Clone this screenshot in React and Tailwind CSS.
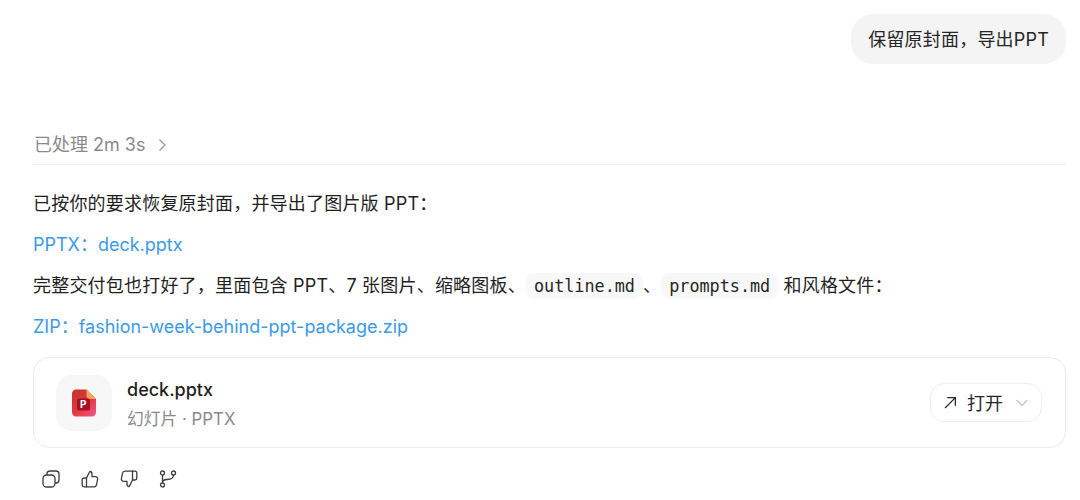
import React from "react";

function PptIcon() {
  return (
    <svg width="24" height="28" viewBox="0 0 24 28" fill="none">
      <defs>
        <linearGradient id="g1" x1="0" y1="0" x2="24" y2="28" gradientUnits="userSpaceOnUse">
          <stop offset="0" stopColor="#bf3328" />
          <stop offset="0.55" stopColor="#e23a3f" />
          <stop offset="1" stopColor="#f4558f" />
        </linearGradient>
      </defs>
      <path d="M4 0.500H14.500L24 10V23.500C24 25.700 22.200 27.500 20 27.500H4C1.800 27.500 0 25.700 0 23.500V4.500C0 2.300 1.800 0.500 4 0.500Z" fill="url(#g1)" />
      <path d="M14.500 0.500L24 10H18C16 10 14.500 8.500 14.500 6.500Z" fill="#f6a65c" />
      <rect x="5" y="9.500" width="13" height="12" rx="2" fill="#a80f24" />
    </svg>
  );
}

function CopyIcon() {
  return (
    <svg width="18" height="18" viewBox="0 0 18 18" fill="none" stroke="#3d3d3d" strokeWidth="1.300" strokeLinejoin="round">
      <rect x="1" y="5" width="12" height="12" rx="3.500" />
      <path d="M5 5V4C5 2.300 6.300 1 8 1H14C15.700 1 17 2.300 17 4V10C17 11.700 15.700 13 14 13H13" />
    </svg>
  );
}

function ThumbUp() {
  return (
    <svg width="18" height="18" viewBox="0 0 18 18" fill="none" stroke="#3d3d3d" strokeWidth="1.300" strokeLinejoin="round" strokeLinecap="round">
      <path d="M5.500 8L8.800 1.500C10.300 1.500 11 2.700 11 4V6.700H14.500C16 6.700 16.900 8 16.600 9.400L15.500 14.800C15.300 16 14.300 16.800 13 16.800H5.500Z" />
      <path d="M5.500 8H3C2 8 1.200 8.800 1.200 9.800V15C1.200 16 2 16.800 3 16.800H5.500" />
    </svg>
  );
}

function ThumbDown() {
  return (
    <svg width="18" height="18" viewBox="0 0 18 18" fill="none" stroke="#3d3d3d" strokeWidth="1.300" strokeLinejoin="round" strokeLinecap="round">
      <path d="M12.500 10L9.200 16.500C7.700 16.500 7 15.300 7 14V11.300H3.500C2 11.300 1.100 10 1.400 8.600L2.500 3.200C2.700 2 3.700 1.200 5 1.200H12.500Z" />
      <path d="M12.500 10H15C16 10 16.800 9.200 16.800 8.200V3C16.800 2 16 1.200 15 1.200H12.500" />
    </svg>
  );
}

function BranchIcon() {
  return (
    <svg width="18" height="18" viewBox="0 0 18 18" fill="none" stroke="#3d3d3d" strokeWidth="1.300">
      <circle cx="3.500" cy="3" r="2" />
      <circle cx="3.500" cy="15" r="2" />
      <circle cx="14.500" cy="3" r="2" />
      <path d="M3.500 5V13M14.500 5C14.500 8.500 11 9.500 8 9.500C5.500 9.500 3.500 10.500 3.500 13" />
    </svg>
  );
}

function Code({ children }) {
  return (
    <code className="rounded-lg bg-[#f8f8f8] px-2 py-[3px] text-[16.800px] tracking-normal text-[#262626] [font-family:'DejaVu_Sans_Mono','Liberation_Mono',monospace]">
      {children}
    </code>
  );
}

export default function App() {
  return (
    <div className="flex h-[500px] w-[1080px] flex-col overflow-hidden bg-white pl-[33px] pr-[14px] pt-[14px] text-[18px] text-[#1f1f1f] antialiased [font-family:Inter,'Noto_Sans_CJK_SC',sans-serif]">
      <div className="flex justify-end">
        <div className="flex h-[50px] items-center rounded-[22px] bg-[#f4f4f4] px-[17px] pt-[1px] tracking-[0.2px] text-[#262626]">
          保留原封面，导出PPT
        </div>
      </div>

      <div className="mt-[66px] flex h-[35px] items-start gap-3 border-b border-[#f1f1f1] pl-[1px] text-[#8a8a8a]">
        <span className="leading-[30px]">已处理 2m 3s</span>
        <svg className="mt-[8px]" width="9" height="14" viewBox="0 0 9 14" fill="none" stroke="#9a9a9a" strokeWidth="1.300">
          <path d="M1.500 1.500L7 7L1.500 12.500" />
        </svg>
      </div>

      <div className="mt-[25px] flex flex-col gap-[13px] leading-[28px]">
        <p className="tracking-[0.2px]">已按你的要求恢复原封面，并导出了图片版 PPT：</p>
        <p className="text-[#3b9ae8]">PPTX：deck.pptx</p>
        <p className="tracking-[0.2px]">
          完整交付包也打好了，里面包含 PPT、7 张图片、缩略图板、<Code>outline.md</Code>、<Code>prompts.md</Code> 和风格文件：
        </p>
        <p className="text-[#3b9ae8]">ZIP：fashion-week-behind-ppt-package.zip</p>
      </div>

      <div className="mt-[16px] flex h-[91px] items-center justify-between rounded-2xl border border-[#ececec] pl-[22px] pr-[23px]">
        <div className="flex items-center gap-[15px]">
          <div className="flex h-[56px] w-[56px] items-center justify-center rounded-2xl bg-[#f7f7f7]">
            <div className="relative">
              <PptIcon />
              <span className="absolute left-[8px] top-[10px] text-[10px] font-bold leading-[10px] text-white">P</span>
            </div>
          </div>
          <div className="flex flex-col pt-[4px]">
            <span className="font-medium leading-[28px] text-[#1f1f1f]">deck.pptx</span>
            <span className="mt-[1px] text-[16.800px] leading-[28px] text-[#8a8a8a]">幻灯片 · PPTX</span>
          </div>
        </div>
        <div className="flex h-[39px] items-center gap-[10px] rounded-[14px] border border-[#efefef] pl-[14px] pr-[12px] text-[#262626]">
          <svg className="ml-[-1px]" width="13" height="13" viewBox="0 0 12 12" fill="none" stroke="#2a2a2a" strokeWidth="1.200">
            <path d="M1 11L10.500 1.500M3 1.500H10.500V9" />
          </svg>
          <span className="pt-[2px]">打开</span>
          <svg className="ml-[2px]" width="14" height="8" viewBox="0 0 14 8" fill="none" stroke="#c4c4c4" strokeWidth="1.300">
            <path d="M1.500 1L7 6.500L12.500 1" />
          </svg>
        </div>
      </div>

      <div className="mt-[22px] flex items-center gap-[21px] pl-[9px]">
        <CopyIcon />
        <ThumbUp />
        <ThumbDown />
        <BranchIcon />
      </div>
    </div>
  );
}
